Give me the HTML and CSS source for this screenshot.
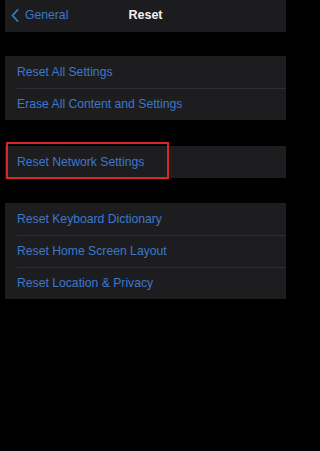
FILE: index.html
```html
<!DOCTYPE html>
<html>
<head>
<meta charset="utf-8">
<link rel="stylesheet" href="styles.css">
</head>
<body>
<div class="screen">
  <header class="nav">
    <div class="back">
      <svg class="chev" width="8" height="13" viewBox="0 0 8 13"><path d="M6.5 1 L1.5 6.5 L6.5 12" fill="none" stroke="#3b78cc" stroke-width="1.8" stroke-linecap="round" stroke-linejoin="round"/></svg>
      <span>General</span>
    </div>
    <div class="title">Reset</div>
  </header>

  <div class="group g1">
    <div class="row">Reset All Settings</div>
    <div class="row">Erase All Content and Settings</div>
  </div>

  <div class="group g2">
    <div class="row">Reset Network Settings<span class="highlight"></span></div>
  </div>

  <div class="group g3">
    <div class="row">Reset Keyboard Dictionary</div>
    <div class="row">Reset Home Screen Layout</div>
    <div class="row">Reset Location &amp; Privacy</div>
  </div>
</div>
</body>
</html>
```
FILE: styles.css
```css
html, body {
  margin: 0;
  padding: 0;
  background: #000;
}
body {
  width: 294px;
  height: 451px;
  overflow: hidden;
  font-family: "Liberation Sans", Arial, sans-serif;
}
.screen {
  display: flex;
  flex-direction: column;
  padding: 0 8px 0 5px;
}
.nav {
  position: relative;
  height: 32px;
  background: #1c1c1e;
  display: flex;
  align-items: center;
  justify-content: center;
}
.back {
  position: absolute;
  left: 6px;
  top: 0;
  height: 30px;
  display: flex;
  align-items: center;
  gap: 6px;
  color: #3b78cc;
  font-size: 12.2px;
}
.chev { display: block; }
.title {
  color: #f2f2f2;
  font-weight: bold;
  font-size: 12.5px;
  margin-top: -2px;
}
.group {
  background: #1d1d20;
  display: flex;
  flex-direction: column;
}
.g1 { margin-top: 24px; }
.g2 { margin-top: 26px; }
.g3 { margin-top: 25px; }
.row {
  position: relative;
  height: 32px;
  display: flex;
  align-items: center;
  padding-left: 12px;
  color: #3b78cc;
  font-size: 12.2px;
}
.row + .row::before {
  content: "";
  position: absolute;
  left: 12px;
  right: 0;
  top: 0;
  height: 1px;
  background: #2e2e31;
}
.highlight {
  position: absolute;
  left: 1px;
  top: -4px;
  width: 159px;
  height: 33px;
  border: 2px solid #d8262c;
}
```
